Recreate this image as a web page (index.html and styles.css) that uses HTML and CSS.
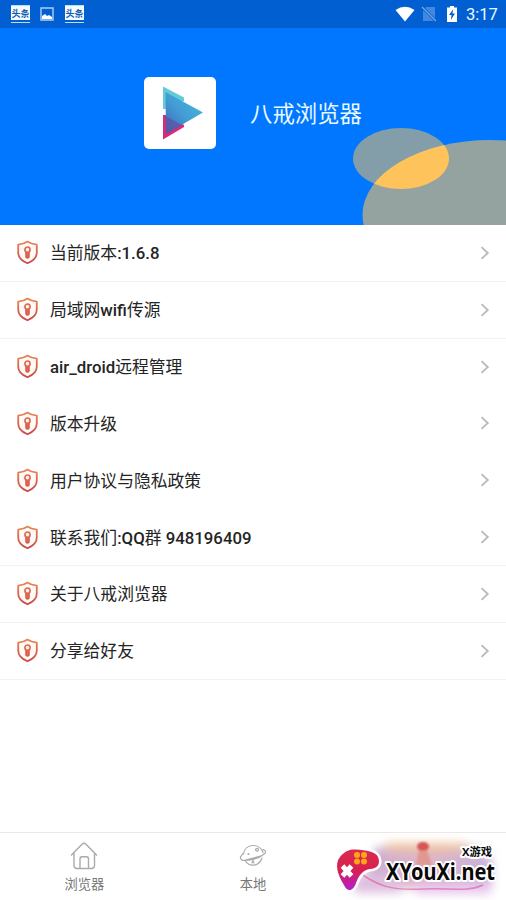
FILE: index.html
```html
<!DOCTYPE html>
<html lang="zh-CN">
<head>
<meta charset="utf-8">
<title>八戒浏览器</title>
<link rel="stylesheet" href="styles.css">
</head>
<body>
<svg class="defs" width="0" height="0" aria-hidden="true">
  <defs>
    <linearGradient id="red" x1="0" y1="0" x2="0" y2="1"><stop stop-color="#e98658"/><stop offset="1" stop-color="#c94848"/></linearGradient>
    <symbol id="shield" viewBox="0 0 24 26">
      <path d="M12 1.6C9 3.8 5.6 4.5 2.3 4.7V13C2.3 18.5 6.5 22 12 24.2C17.5 22 21.7 18.5 21.7 13V4.7C18.4 4.5 15 3.8 12 1.6Z" fill="#fffaf6" stroke="url(#red)" stroke-width="1.9" stroke-linejoin="round"/>
      <path d="M10.4 12.2V17.8Q12 19.8 13.6 17.8V12.2" fill="#e06a55" stroke="#d8594e" stroke-width="1.5"/>
      <circle cx="12" cy="10" r="2.7" fill="#fff1e8" stroke="#df6753" stroke-width="1.7"/>
    </symbol>
    <symbol id="arrow" viewBox="0 0 10 14"><path d="M1.5 1.2L7.8 7L1.5 12.8" fill="none" stroke="#b9b9b9" stroke-width="1.8"/></symbol>
  </defs>
</svg>
<div class="screen">
  <header class="status">
    <div class="notices">
      <span class="news">头条</span>
      <svg class="photo" width="14" height="14" viewBox="0 0 14 14"><path d="M1 1H13V13H1Z" fill="none" stroke="#a9d0f6" stroke-width="1.4"/><path d="M2 12V9L5 7L7 9L9 8L12 10V12Z" fill="#fff"/></svg>
      <span class="news">头条</span>
    </div>
    <div class="system">
      <svg width="20" height="16" viewBox="0 0 20 16"><path d="M.5 4Q10-2.5 19.5 4L10 15.5Z" fill="#fff"/></svg>
      <svg class="sim" width="16" height="16" viewBox="0 0 16 16"><path d="M5 1H14V15H2V5Z" fill="#4388dd"/><path d="M1 1L15 15" stroke="#0862d2" stroke-width="3"/><path d="M1 1L15 15" stroke="#6ea6e8" stroke-width="1.2"/></svg>
      <svg class="battery" width="10" height="16" viewBox="0 0 10 16"><path d="M3 0H7V1.5H10V16H0V1.5H3Z" fill="#fff"/><path d="M6.3 3L2 9H4.6L3.8 14L8 7.6H5.4Z" fill="#075bc7"/></svg>
      <span class="time">3:17</span>
    </div>
  </header>
  <section class="hero">
    <svg class="shapes" width="506" height="197" viewBox="0 28 506 197">
      <defs><clipPath id="overlap"><ellipse cx="401" cy="158.5" rx="48" ry="30.5"/></clipPath></defs>
      <ellipse cx="401" cy="158.5" rx="48" ry="30.5" fill="#839ea9"/>
      <ellipse cx="490" cy="215" rx="127.5" ry="75" fill="#94a39f"/>
      <ellipse cx="490" cy="215" rx="127.5" ry="75" fill="#fec35a" clip-path="url(#overlap)"/>
    </svg>
    <div class="logo">
      <svg width="72" height="72" viewBox="0 0 72 72">
        <defs><linearGradient id="play" x1="0" y1="1" x2="1" y2="0"><stop stop-color="#3d64ba"/><stop offset=".45" stop-color="#439bd4"/><stop offset="1" stop-color="#48bfe0"/></linearGradient></defs>
        <path d="M19 9.5L40 20.5V24L22 32H19Z" fill="#63cbd8"/>
        <path d="M19 38H24L40 48V50L19 62.5Z" fill="#d82a78"/>
        <path d="M21.5 15L59 35.5L22 57Z" fill="url(#play)"/>
        <path d="M21.5 39L38 48L22 57Z" fill="#6150a0" opacity=".7"/>
      </svg>
    </div>
    <h1>八戒浏览器</h1>
  </section>
  <main class="list">
    <div class="row"><svg class="shield"><use href="#shield"/></svg><span>当前版本<b>:1.6.8</b></span><svg class="arrow"><use href="#arrow"/></svg></div>
    <div class="row"><svg class="shield"><use href="#shield"/></svg><span>局域网<b>wifi</b>传源</span><svg class="arrow"><use href="#arrow"/></svg></div>
    <div class="row plain"><svg class="shield"><use href="#shield"/></svg><span><b>air_droid</b>远程管理</span><svg class="arrow"><use href="#arrow"/></svg></div>
    <div class="row plain"><svg class="shield"><use href="#shield"/></svg><span>版本升级</span><svg class="arrow"><use href="#arrow"/></svg></div>
    <div class="row plain"><svg class="shield"><use href="#shield"/></svg><span>用户协议与隐私政策</span><svg class="arrow"><use href="#arrow"/></svg></div>
    <div class="row"><svg class="shield"><use href="#shield"/></svg><span>联系我们<b>:QQ</b>群<b> 948196409</b></span><svg class="arrow"><use href="#arrow"/></svg></div>
    <div class="row"><svg class="shield"><use href="#shield"/></svg><span>关于八戒浏览器</span><svg class="arrow"><use href="#arrow"/></svg></div>
    <div class="row"><svg class="shield"><use href="#shield"/></svg><span>分享给好友</span><svg class="arrow"><use href="#arrow"/></svg></div>
  </main>
  <nav class="tabs">
    <div class="tab">
      <svg width="28" height="28" viewBox="0 0 28 28" fill="none" stroke="#aaa" stroke-width="1.4" stroke-linecap="round" stroke-linejoin="round"><path d="M1.5 13L12 2.2Q14 .3 16 2.2L26.5 13M4 11V23.5Q4 26.5 7 26.5H21.5Q24.5 26.5 24.5 23.5V11M10 26V17Q10 14.8 12 14.8H16.5Q18.5 14.8 18.5 17V26"/></svg>
      <span>浏览器</span>
    </div>
    <div class="tab">
      <svg width="28" height="28" viewBox="0 0 28 28" fill="none" stroke="#aaa" stroke-width="1.2" stroke-linecap="round"><path d="M4.3 12.2C6 1.3 20.5.5 24 10.5M6.2 18.5C10 25.5 20.5 24.5 23 16M4 11.5L1.4 15Q1.5 18.7 5.5 18.4C13 18.2 20.5 16.2 25.5 11.8Q28 9 24.5 7.8L22.8 8M6.5 18.2L21.5 14"/><circle cx="18" cy="7.7" r="1.4"/><circle cx="9.5" cy="12" r=".5"/><path d="M13 21L14 18.5L15 21"/></svg>
      <span>本地</span>
    </div>
    <div class="tab"></div>
  </nav>
  <svg class="watermark" width="180" height="70" viewBox="0 0 180 70">
    <defs>
      <filter id="soft" x="-20%" y="-40%" width="140%" height="180%"><feGaussianBlur stdDeviation="5"/></filter>
      <filter id="small-soft"><feGaussianBlur stdDeviation="1.2"/></filter>
      <linearGradient id="pad" x1="0" y1="0" x2="0" y2="1"><stop stop-color="#d92b50"/><stop offset=".5" stop-color="#d8204f"/><stop offset="1" stop-color="#b51dd0"/></linearGradient>
      <linearGradient id="cloud"><stop stop-color="#c9acd5"/><stop offset=".5" stop-color="#dfb4c8"/><stop offset="1" stop-color="#c6b2dc"/></linearGradient>
    </defs>
    <g filter="url(#soft)"><path d="M50 17H154L166 30V58H35Z" fill="url(#cloud)"/><path d="M60 13H140V22H60Z" fill="#edc3a0"/><path d="M28 45H75V63H28Z" fill="#dfc0df"/><path d="M90 53H165V64H90Z" fill="#e8c8ee"/></g>
    <g filter="url(#small-soft)"><ellipse cx="97" cy="16.5" rx="6" ry="4.5" fill="#d65555"/><path d="M93 20H101L106 35H90Z" fill="#e08c7c" opacity=".7"/></g>
    <path d="M35 44C52 55 63 61 98 59C125 58 142 62 157 55" fill="none" stroke="#d94b91" stroke-width="1.5" opacity=".55"/>
    <path d="M14 27C19 20 26 19 30 19.5C40 20 50 22 52 27C55 34 51 39 44 39C37 40 33 45 30 53C27 62 21 62 18 55C12 46 8 34 14 27Z" fill="url(#pad)" stroke="#fff" stroke-width="5" paint-order="stroke"/>
    <path d="M16.5 36L25.5 46M25.5 36L16.5 46" stroke="#fff" stroke-width="5"/>
    <g fill="#ffa618"><circle cx="31" cy="25" r="3"/><circle cx="38" cy="25" r="3"/><circle cx="31" cy="31.5" r="3"/><circle cx="38" cy="31.5" r="3"/></g>
    <text class="wm-small" x="136" y="26" textLength="30" lengthAdjust="spacingAndGlyphs">X游戏</text>
    <text class="wm-large" x="60" y="49.5" textLength="109" lengthAdjust="spacingAndGlyphs">XYouXi.net</text>
  </svg>
</div>
</body>
</html>
```

FILE: styles.css
```css
* { box-sizing: border-box; }
body { margin: 0; background: #fff; color: #242424; font-family: Roboto, "Noto Sans CJK SC", sans-serif; }
.defs { position: absolute; }
.screen { position: relative; width: 506px; height: 900px; display: flex; flex-direction: column; overflow: hidden; }
.status { height: 28px; flex: none; display: flex; justify-content: space-between; padding: 0 9px 0 11px; background: #025fd2; color: #e9faff; }
.notices, .system { display: flex; align-items: center; }
.notices { gap: 10px; }
.news { width: 19px; height: 18px; padding-top: 1px; border: 1px solid #b7ddfa; border-width: 1px 0; background: linear-gradient(#f3fcff 0 14px, #025fd2 14px); color: #145aad; font-size: 9px; line-height: 14px; font-weight: 700; text-align: center; }
.news:last-child { margin-left: 1px; }
.sim { margin-left: 6px; }
.battery { margin-left: 10px; }
.time { width: 31px; margin-left: 9px; font-size: 16.5px; line-height: 29px; padding-top: 1px; }
.hero { position: relative; height: 197px; flex: none; display: flex; align-items: flex-start; padding: 49px 0 0 144px; background: #0177ff; }
.shapes { position: absolute; inset: 0; }
.logo { width: 72px; height: 72px; background: #fff; border-radius: 5px; overflow: hidden; }
.logo svg { display: block; }
h1 { position: relative; margin: 0 0 0 34px; font-size: 22.4px; line-height: 75px; font-weight: 400; color: #e9fbff; white-space: nowrap; }
.list { flex: 1; }
.row { display: flex; align-items: center; height: 56.85px; padding: 0 16px; border-bottom: 1px solid #f3f3f3; }
.row.plain { border-color: transparent; }
.shield { width: 23px; height: 25px; flex: none; }
.row span { margin-left: 11px; padding-top: 1px; flex: 1; font-size: 16.8px; line-height: 24px; font-weight: 400; white-space: pre; }
.row b { font-weight: 500; }
.arrow { width: 10px; height: 14px; flex: none; }
.tabs { height: 68px; flex: none; display: grid; grid-template-columns: repeat(3, 1fr); border-top: 1px solid #e9e9e9; }
.tab { display: flex; flex-direction: column; align-items: center; padding-top: 9px; font-size: 13.3px; line-height: 20px; color: #777; }
.tab span { margin-top: 5px; }
.watermark { position: absolute; left: 326px; top: 830px; overflow: visible; }
.wm-small, .wm-large { font-weight: 700; fill: #080808; stroke: #fff; stroke-width: 4px; stroke-linejoin: round; paint-order: stroke; }
.wm-small { font-family: "Open Sans", "Noto Sans CJK SC", sans-serif; font-size: 11px; }
.wm-large { font-family: "Noto Sans", sans-serif; font-size: 24px; }
```
